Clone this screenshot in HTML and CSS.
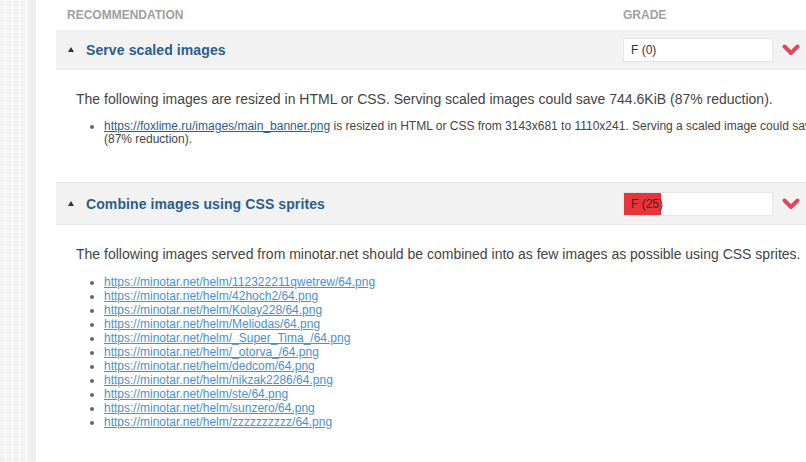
FILE: index.html
```html
<!DOCTYPE html>
<html>
<head>
<meta charset="utf-8">
<link rel="stylesheet" href="styles.css">
</head>
<body>
<div class="page">
  <aside class="side"><div class="side-edge"></div></aside>
  <main class="main">
    <div class="table">
      <div class="thead">
        <div class="th-rec">RECOMMENDATION</div>
        <div class="th-grade">GRADE</div>
      </div>

      <section class="rule">
        <div class="rule-head">
          <div class="rule-name"><span class="tri"></span><span class="title">Serve scaled images</span></div>
          <div class="rule-grade">
            <div class="gbar"><div class="gfill" style="width:0%"></div><span class="gtext">F (0)</span></div>
            <svg class="chev" width="18" height="12" viewBox="0 0 18 12"><polyline points="2.5,2.5 9,9 15.5,2.5" fill="none" stroke="#e0475f" stroke-width="4" stroke-linecap="round" stroke-linejoin="round"/></svg>
          </div>
        </div>
        <div class="rule-body">
          <p>The following images are resized in HTML or CSS. Serving scaled images could save 744.6KiB (87% reduction).</p>
          <ul class="list">
            <li><a class="dark" href="#">https://foxlime.ru/images/main_banner.png</a> is resized in HTML or CSS from 3143x681 to 1110x241. Serving a scaled image could save 744.6KiB (87% reduction).</li>
          </ul>
        </div>
      </section>

      <section class="rule">
        <div class="rule-head">
          <div class="rule-name"><span class="tri"></span><span class="title">Combine images using CSS sprites</span></div>
          <div class="rule-grade">
            <div class="gbar"><div class="gfill" style="width:25%"></div><span class="gtext">F (25)</span></div>
            <svg class="chev" width="18" height="12" viewBox="0 0 18 12"><polyline points="2.5,2.5 9,9 15.5,2.5" fill="none" stroke="#e0475f" stroke-width="4" stroke-linecap="round" stroke-linejoin="round"/></svg>
          </div>
        </div>
        <div class="rule-body">
          <p>The following images served from minotar.net should be combined into as few images as possible using CSS sprites.</p>
          <ul class="list links">
            <li><a href="#">https://minotar.net/helm/112322211qwetrew/64.png</a></li>
            <li><a href="#">https://minotar.net/helm/42hoch2/64.png</a></li>
            <li><a href="#">https://minotar.net/helm/Kolay228/64.png</a></li>
            <li><a href="#">https://minotar.net/helm/Meliodas/64.png</a></li>
            <li><a href="#">https://minotar.net/helm/_Super_Tima_/64.png</a></li>
            <li><a href="#">https://minotar.net/helm/_otorva_/64.png</a></li>
            <li><a href="#">https://minotar.net/helm/dedcom/64.png</a></li>
            <li><a href="#">https://minotar.net/helm/nikzak2286/64.png</a></li>
            <li><a href="#">https://minotar.net/helm/ste/64.png</a></li>
            <li><a href="#">https://minotar.net/helm/sunzero/64.png</a></li>
            <li><a href="#">https://minotar.net/helm/zzzzzzzzzz/64.png</a></li>
          </ul>
        </div>
      </section>
    </div>
  </main>
</div>
</body>
</html>
```
FILE: styles.css
```css
html, body {
  margin: 0;
  padding: 0;
  background: #fff;
  overflow: hidden;
}
body {
  width: 806px;
  height: 462px;
  font-family: "Liberation Sans", Arial, sans-serif;
  color: #444;
}
.page {
  display: flex;
  height: 462px;
}
.side {
  width: 36px;
  flex: none;
  display: flex;
  justify-content: flex-end;
  background-color: #f5f5f5;
  background-image:
    repeating-linear-gradient(90deg, rgba(0,0,0,0.008) 0 4px, rgba(255,255,255,0.35) 4px 7px),
    repeating-linear-gradient(0deg, rgba(0,0,0,0.008) 0 5px, rgba(255,255,255,0.35) 5px 8px);
}
.side-edge {
  width: 8px;
  background: #efefef;
}
.main {
  flex: none;
  padding-left: 20px;
}
.table {
  width: 830px;
}
.thead {
  display: flex;
  height: 30px;
  align-items: center;
  font-size: 12px;
  font-weight: bold;
  color: #a0a0a0;
}
.th-rec {
  width: 556px;
  padding-left: 11px;
  padding-top: 0;
}
.rule-head {
  display: flex;
  align-items: center;
  height: 39px;
  background: #f2f2f2;
  border-bottom: 1px solid #ebebeb;
}
.rule + .rule .rule-head {
  border-top: 1px solid #e6e6e6;
  height: 41px;
}
.rule-name {
  width: 567px;
  display: flex;
  align-items: center;
}
.tri {
  width: 0;
  height: 0;
  margin-left: 12px;
  margin-right: 12px;
  border-left: 3.5px solid transparent;
  border-right: 3.5px solid transparent;
  border-bottom: 5px solid #333;
}
.title {
  font-size: 14px;
  font-weight: bold;
  color: #2a5e8b;
  letter-spacing: 0.1px;
}
.rule-grade {
  display: flex;
  align-items: center;
}
.gbar {
  position: relative;
  width: 148px;
  height: 22px;
  background: #fff;
  border: 1px solid #e6e6e6;
}
.gfill {
  position: absolute;
  left: 0;
  top: 0;
  bottom: 0;
  background: #e8353c;
}
.gtext {
  position: relative;
  display: block;
  padding-left: 7px;
  line-height: 22px;
  font-size: 12px;
  color: #333;
}
.rule + .rule .gtext {
  color: #4a2020;
}
.chev {
  margin-left: 9px;
}
.rule-body {
  padding: 20px 0 36px 20px;
}
.rule-body p {
  margin: 0;
  font-size: 14px;
  line-height: 18px;
  color: #444;
}
.list {
  margin: 12px 0 0 0;
  padding-left: 28px;
  font-size: 12px;
  line-height: 13px;
  color: #444;
}
.list li::marker {
  color: #666;
}
.list a {
  color: #4b91c9;
}
.list a.dark {
  color: #2a5e8b;
}
.links {
  margin-top: 12px;
  line-height: 14px;
}
```
